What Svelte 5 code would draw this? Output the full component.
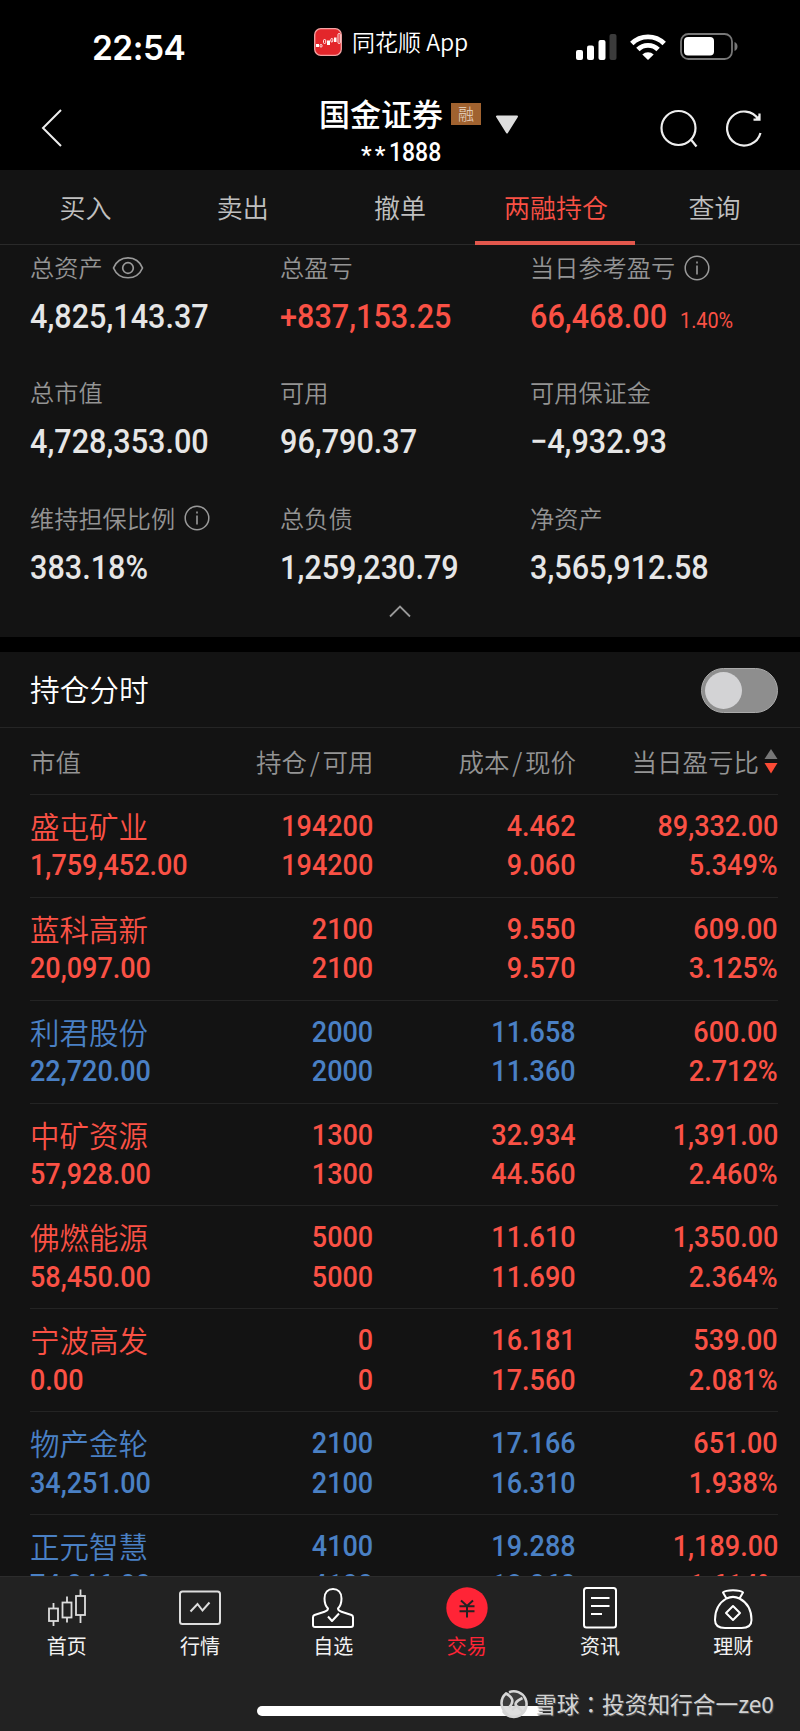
<script>
  const tabs = ['买入', '卖出', '撤单', '两融持仓', '查询'];
  const stats = [
    { label: '总资产', value: '4,825,143.37', icon: 'eye' },
    { label: '总盈亏', value: '+837,153.25', red: true },
    { label: '当日参考盈亏', value: '66,468.00', red: true, icon: 'info', pct: '1.40%' },
    { label: '总市值', value: '4,728,353.00' },
    { label: '可用', value: '96,790.37' },
    { label: '可用保证金', value: '−4,932.93' },
    { label: '维持担保比例', value: '383.18%', icon: 'info' },
    { label: '总负债', value: '1,259,230.79' },
    { label: '净资产', value: '3,565,912.58' }
  ];
  const rows = [
    ['盛屯矿业', '1,759,452.00', '194200', '194200', '4.462', '9.060', '89,332.00', '5.349%'],
    ['蓝科高新', '20,097.00', '2100', '2100', '9.550', '9.570', '609.00', '3.125%'],
    ['利君股份', '22,720.00', '2000', '2000', '11.658', '11.360', '600.00', '2.712%', true],
    ['中矿资源', '57,928.00', '1300', '1300', '32.934', '44.560', '1,391.00', '2.460%'],
    ['佛燃能源', '58,450.00', '5000', '5000', '11.610', '11.690', '1,350.00', '2.364%'],
    ['宁波高发', '0.00', '0', '0', '16.181', '17.560', '539.00', '2.081%'],
    ['物产金轮', '34,251.00', '2100', '2100', '17.166', '16.310', '651.00', '1.938%', true],
    ['正元智慧', '74,046.00', '4100', '4100', '19.288', '18.060', '1,189.00', '1.614%', true]
  ];
</script>

<div class="screen">
  <header>
    <div class="status">
      <div class="time">22:54</div>
      <div class="island">
        <svg width="28" height="28" viewBox="0 0 28 28">
          <rect x=".7" y=".7" width="26.6" height="26.6" rx="6" fill="#e3262b" stroke="#f4a3a3" stroke-width="1.3" />
          <g fill="#fff"><rect x="2" y="16" width="3" height="3" /><rect x="13" y="12.5" width="3" height="4.5" /><rect x="20" y="9.500" width="2.500" height="4.500" /></g>
          <g fill="none" stroke="#fff" stroke-width=".9"><rect x="6" y="16.500" width="2" height="2.500" rx=".8" /><rect x="9.500" y="11.500" width="2.200" height="4" rx="1" /><rect x="16.800" y="10.500" width="2" height="3.500" rx="1" /><rect x="24" y="5.500" width="2.200" height="10" rx="1" /></g>
        </svg>
        <span>同花顺 App</span>
      </div>
      <div class="signals">
        <svg width="42" height="28" viewBox="0 0 42 28">
          <rect x="1" y="17" width="7" height="10" rx="2" fill="#fff" /><rect x="12" y="12.500" width="7" height="14.500" rx="2" fill="#fff" />
          <rect x="23.500" y="7" width="7" height="20" rx="2" fill="#fff" /><rect x="34.500" y="1" width="7" height="26" rx="2" fill="#3b3b3b" />
        </svg>
        <svg class="wifi" width="36" height="28" viewBox="0 0 36 28">
          <g fill="none" stroke="#fff" stroke-width="4.800"><path d="M1.800 10.500a23 23 0 0 1 32.400 0" /><path d="M7.900 16.500a14.300 14.300 0 0 1 20.200 0" /></g>
          <path d="M18 27l-5.700-5.500a8.200 8.200 0 0 1 11.400 0z" fill="#fff" />
        </svg>
        <svg class="battery" width="60" height="28" viewBox="0 0 60 28">
          <rect x="1" y="1" width="51" height="25" rx="7.500" fill="none" stroke="#777" stroke-width="1.800" />
          <rect x="4" y="4" width="30" height="18.500" rx="4" fill="#fff" /><path d="M54.500 9c4 1.500 4 7.500 0 9z" fill="#777" />
        </svg>
      </div>
    </div>
    <div class="titlebar">
      <svg class="back" width="24" height="40" viewBox="0 0 24 40"><path d="M21 2 3 20l18 18" fill="none" stroke="#eee" stroke-width="2" /></svg>
      <div class="account">
        <div class="broker"><b>国金证券</b><i>融</i></div>
        <div class="acct"><em>**</em><span class="num">1888</span></div>
      </div>
      <svg class="drop" width="24" height="20" viewBox="0 0 24 20"><path d="M2 1.500h20L12 17.500z" fill="#ddd" stroke="#ddd" stroke-width="2" stroke-linejoin="round" /></svg>
      <div class="tools">
        <svg width="40" height="40" viewBox="0 0 40 40"><g fill="none" stroke="#eee" stroke-width="2.200"><circle cx="18.500" cy="19" r="17" /><path d="M30.500 30l6 7.500" /></g></svg>
        <svg width="40" height="40" viewBox="0 0 40 40"><g fill="none" stroke="#eee" stroke-width="2.200"><path d="M34.500 24A17 17 0 1 1 32.500 10.500" /><path d="M27.500 10.700h6V4.500" /></g><path d="M29 10.500l4-4v4z" fill="#eee" /></svg>
      </div>
    </div>
  </header>

  <nav class="tabs">
    {#each tabs as t, i}
      <div class="tab" class:active={i === 3}>{t}</div>
    {/each}
  </nav>

  <section class="summary">
    <div class="grid">
      {#each stats as s}
        <div class="stat">
          <div class="label">
            <span>{s.label}</span>
            {#if s.icon === 'eye'}
              <svg class="eye" width="32" height="24" viewBox="0 0 32 24"><g fill="none" stroke="#999" stroke-width="1.700"><path d="M1.500 12C7-1.500 25-1.500 30.500 12 25 25 7 25 1.500 12z" stroke-linejoin="round" /><circle cx="16" cy="12" r="5.300" /></g></svg>
            {:else if s.icon === 'info'}
              <svg width="26" height="26" viewBox="0 0 26 26"><circle cx="13" cy="13" r="11.800" fill="none" stroke="#999" stroke-width="1.500" /><path d="M13 10.500v9M13 6.500v2" stroke="#999" stroke-width="1.600" /></svg>
            {/if}
          </div>
          <div class="value" class:red={s.red}>
            <span class="num">{s.value}</span>{#if s.pct}<span class="num pct">{s.pct}</span>{/if}
          </div>
        </div>
      {/each}
    </div>
    <svg class="fold" width="24" height="14" viewBox="0 0 24 14"><path d="M2 12.500 12 2.500l10 10" fill="none" stroke="#999" stroke-width="1.800" /></svg>
  </section>

  <section class="positions">
    <div class="chart-row"><span>持仓分时</span><div class="toggle"></div></div>
    <div class="table">
      <div class="cols head">
        <div>市值</div>
        <div>持仓<s>/</s>可用</div>
        <div>成本<s>/</s>现价</div>
        <div class="sort">当日盈亏比
          <svg width="14" height="26" viewBox="0 0 14 26"><path d="M7 1l6.500 10H.5z" fill="#777" /><path d="M.5 15h13L7 25.500z" fill="#fb4b35" /></svg>
        </div>
      </div>
      {#each rows as r}
        <div class="cols row" class:blue={r[8]}>
          <div class="first"><p class="name">{r[0]}</p><p><span class="num">{r[1]}</span></p></div>
          <div><p><span class="num">{r[2]}</span></p><p><span class="num">{r[3]}</span></p></div>
          <div><p><span class="num">{r[4]}</span></p><p><span class="num">{r[5]}</span></p></div>
          <div class="gain"><p><span class="num">{r[6]}</span></p><p><span class="num">{r[7]}</span></p></div>
        </div>
      {/each}
    </div>
  </section>

  <footer>
    <div class="menu">
      <div class="item">
        <svg width="44" height="44" viewBox="0 0 44 44"><g fill="none" stroke="#ddd" stroke-width="1.800"><rect x="4" y="22.500" width="9" height="12.500" /><path d="M8.500 17v5.500M8.500 35v5" /><rect x="17.500" y="16.500" width="9" height="15" /><path d="M22 10.500v6M22 31.500v5" /><rect x="31" y="10" width="9" height="19" /><path d="M35.500 3.500V10M35.500 29v8" /></g></svg>
        <span>首页</span>
      </div>
      <div class="item">
        <svg width="44" height="44" viewBox="0 0 44 44"><g fill="none" stroke="#ddd" stroke-width="2"><rect x="2" y="5.500" width="40" height="32.500" rx="2.500" /><path d="M12.500 25.500l7-7.500 5 6.500 7-8" /></g></svg>
        <span>行情</span>
      </div>
      <div class="item">
        <svg width="44" height="44" viewBox="0 0 44 44"><g fill="none" stroke="#fff" stroke-width="2" stroke-linejoin="round"><path d="M17 22.500C14.500 20 13.500 17 13.500 12.500 13.500 6.500 17 3 22 3s8.500 3.500 8.500 9.500c0 4.500-1 7.500-3.500 10 0 1.800 1.500 2.500 3.500 3.200L40.500 29c1 .5 1.500 1.200 1.500 2.300V39c0 1.300-.7 2-2 2H4c-1.300 0-2-.7-2-2v-7.700c0-1.100.5-1.800 1.500-2.300l10-3.300c2-.7 3.500-1.400 3.500-3.200z" /><path d="M17 30.500l4 4.500 7-7.500" /></g></svg>
        <span>自选</span>
      </div>
      <div class="item on">
        <svg width="44" height="44" viewBox="0 0 44 44"><circle cx="22" cy="22" r="20.700" fill="#ff2436" /><path d="M16 14.500l6 5.500 6-5.500M14.500 20.200h15M14.500 25.200h15M22 20v11.500" fill="none" stroke="#222" stroke-width="2" /></svg>
        <span>交易</span>
      </div>
      <div class="item">
        <svg width="44" height="44" viewBox="0 0 44 44"><g fill="none" stroke="#fff" stroke-width="2"><rect x="6" y="2" width="32" height="39.500" rx="2.500" /><path d="M13 12h18.500M13 20h18.500M13 28h11" /></g></svg>
        <span>资讯</span>
      </div>
      <div class="item">
        <svg width="44" height="44" viewBox="0 0 44 44"><g fill="none" stroke="#fff" stroke-width="2" stroke-linejoin="round"><path d="M15.500 12.500 12 6.500C15 3.500 29 3.500 32 6.500L28.500 12.500C38 17.500 40.500 27 40.500 34c0 5.500-4 8-10 8H14c-6.500 0-10-2.500-10-8 0-7 2.500-16.500 11.500-21.500z" /><path d="M15.500 12.500c4-2 9-2 13 0" /><path d="M22 20l7 7-7 7-7-7z" /></g></svg>
        <span>理财</span>
      </div>
    </div>
    <div class="home-bar"></div>
    <div class="watermark">
      <svg width="30" height="30" viewBox="0 0 30 30"><circle cx="15" cy="15" r="13" fill="#8884" /><g fill="none" stroke="#d6d6d6" stroke-width="2.600"><path d="M10 3.200A12.800 12.800 0 1 1 4 22" /><path d="M9 25.500C1 20 .5 10 7 4.500c7 4 8.500 8 3 14M23.500 9c-7 3.500-9 6.500-4.500 9l5 5.500M13 21l3.500-3.500" /></g></svg>
      <span>雪球<u>：</u>投资知行合一ze0</span>
    </div>
  </footer>
</div>

<style>
  :global(body) { background: #000; }
  .screen { width: 800px; height: 1731px; overflow: hidden; display: flex; flex-direction: column; background: #000; color: #e6e6e6; font-family: Roboto, "Noto Sans CJK SC", sans-serif; font-weight: 350; }
  .screen * { box-sizing: border-box; }
  svg { display: block; flex: none; }
  p { margin: 0; }
  .num { display: inline-block; font-family: Roboto, sans-serif; font-weight: 500; transform: scaleX(.9); transform-origin: left center; white-space: nowrap; }

  header { height: 170px; flex: none; }
  .status { height: 84px; display: grid; grid-template-columns: 278px 1fr 263px; color: #fff; }
  .time { padding: 30px 0 0 92px; font: 600 33.500px/36px Inter, sans-serif; letter-spacing: -.5px; }
  .island { display: flex; align-items: flex-start; padding: 28px 0 0 36px; gap: 10px; font: 350 23px/28px "Noto Sans CJK SC", sans-serif; white-space: nowrap; }
  .island span { margin-top: -1px; }
  .signals { display: flex; padding: 33px 0 0 38px; }
  .wifi { margin-left: 13px; }
  .battery { margin-left: 14px; }
  .titlebar { display: grid; grid-template-columns: 278px 212px 24px 1fr; height: 86px; }
  .back { margin: 24px 0 0 40px; }
  .account { padding-left: 41px; color: #fff; }
  .broker { display: flex; height: 62px; padding-top: 12px; gap: 8px; font: 500 31px/34px "Noto Sans CJK SC", sans-serif; white-space: nowrap; }
  .broker b { font-weight: 500; }
  .broker i { width: 30px; height: 22px; margin-top: 7px; background: #a0622f; color: #ead9c8; font: 300 16px/21px "Noto Sans CJK SC", sans-serif; text-align: center; }
  .acct { margin-top: -9px; padding-left: 42px; font-size: 25.500px; line-height: 30px; display: flex; }
  .acct em { font: 500 24px/36px Roboto; letter-spacing: 3px; width: 28px; }
  .drop { margin: 31px 0 0 5px; }
  .tools { display: flex; gap: 26px; padding: 25px 0 0 146px; }

  .tabs { height: 75px; flex: none; padding: 0 7px 0 7px; display: grid; grid-template-columns: repeat(5, 1fr); background: #131313; border-bottom: 1px solid #2a2a2a; }
  .tab { font: 350 26px/74px "Noto Sans CJK SC", sans-serif; text-align: center; color: #c0c0c0; }
  .tab.active { color: #fa5145; box-shadow: inset 0 -4px #e2574c; margin: 0 .800px 0 -3.600px; padding-left: 2px; height: 75px; }

  .summary { height: 392px; flex: none; padding: 4px 20px 0 30px; background: #131313; }
  .grid { display: grid; grid-template-columns: 250px 250px 250px; grid-auto-rows: 125.300px; }
  .label { display: flex; align-items: center; gap: 9px; height: 37px; font: 350 24.200px/35px "Noto Sans CJK SC", sans-serif; color: #949494; white-space: nowrap; }
  .label span { margin-top: -2px; }
  .value { height: 60px; font-size: 34px; line-height: 60px; white-space: nowrap; display: flex; align-items: baseline; }
  .red { color: #fa5145; }
  .pct { font-size: 22px; font-weight: 400; margin-left: -2px; }
  .fold { margin: -21px auto 0 358px; }

  .positions { flex: none; height: 924px; margin-top: 15px; overflow: hidden; background: #131313; }
  .chart-row { height: 76px; padding: 1px 22px 0 30px; display: flex; align-items: center; justify-content: space-between; border-bottom: 1px solid #252525; font: 350 29.700px/60px "Noto Sans CJK SC", sans-serif; color: #fff; }
  .chart-row span { margin-top: -2px; }
  .toggle { width: 77px; height: 45px; border-radius: 23px; background: #8e8e8e; border: 1px solid #aaa; padding: 3px; }
  .toggle::before { content: ''; display: block; width: 37px; height: 37px; border-radius: 50%; background: #d3d3d5; }
  .table { margin: 0 22px 0 30px; }
  .cols { display: grid; grid-template-columns: 160px 183.500px 202.500px 202px; text-align: right; border-bottom: 1px solid #242424; }
  .cols > :first-child { text-align: left; }
  .head { height: 67px; font: 350 25.500px/65px "Noto Sans CJK SC", sans-serif; color: #949494; white-space: nowrap; }
  .head s { text-decoration: none; margin: 0 2.800px; }
  .sort { display: flex; justify-content: flex-end; align-items: center; gap: 5px; margin-top: -1px; }
  .row { height: 102.860px; padding-top: 11px; font-size: 30px; line-height: 39.400px; color: #fa5145; }
  .row p { height: 39.400px; }
  .row .num { transform-origin: right center; }
  .row .first .num { transform-origin: left center; }
  .name { font: 350 29.500px/38px "Noto Sans CJK SC", sans-serif; white-space: nowrap; }
  .blue { color: #4a80c4; }
  .gain { color: #fa5145; }

  footer { flex: 1; background: #222; position: relative; border-top: 1px solid #2c2c2c; }
  .menu { display: grid; grid-template-columns: repeat(6, 1fr); padding-top: 9px; }
  .item { display: flex; flex-direction: column; align-items: center; font: 400 20px/26px "Noto Sans CJK SC", sans-serif; color: #f2f2f2; gap: 3px; }
  .on { color: #ff2436; }
  .home-bar { position: absolute; left: 257px; top: 129px; width: 286px; height: 10px; border-radius: 5px; background: #fff; }
  .watermark { position: absolute; left: 499px; top: 112px; display: flex; align-items: center; gap: 5px; color: #d2d2d2; font: 400 22.700px/30px "Noto Sans CJK SC", sans-serif; white-space: nowrap; text-shadow: 1px 1px 1px #555; }
  .watermark span { margin-top: -1px; }
  .watermark u { text-decoration: none; font-family: "Noto Sans CJK TC", sans-serif; }
</style>
